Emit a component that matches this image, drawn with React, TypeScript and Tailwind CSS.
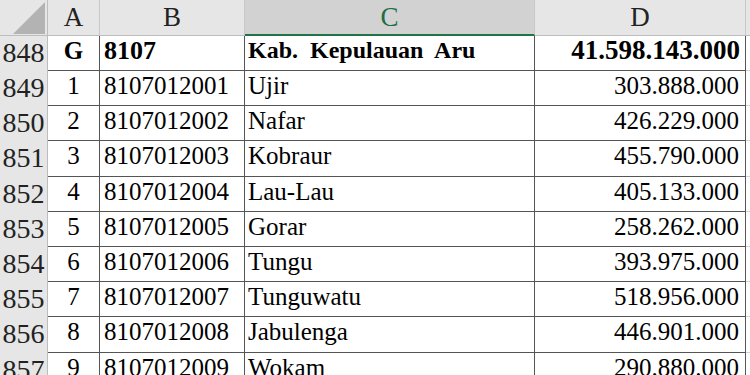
import React from "react";

const rows: [string, string, string, string, string, number][] = [
  ["849", "1", "8107012001", "Ujir", "303.888.000", 35],
  ["850", "2", "8107012002", "Nafar", "426.229.000", 35],
  ["851", "3", "8107012003", "Kobraur", "455.790.000", 36],
  ["852", "4", "8107012004", "Lau-Lau", "405.133.000", 35],
  ["853", "5", "8107012005", "Gorar", "258.262.000", 35],
  ["854", "6", "8107012006", "Tungu", "393.975.000", 35],
  ["855", "7", "8107012007", "Tunguwatu", "518.956.000", 35],
  ["856", "8", "8107012008", "Jabulenga", "446.901.000", 36],
  ["857", "9", "8107012009", "Wokam", "290.880.000", 40],
];

export default function App() {
  return (
    <div className="w-[750px] h-[375px] overflow-hidden bg-white text-black font-['Liberation_Serif','Times_New_Roman',serif]">
      {/* header row */}
      <div className="flex h-[36px] bg-[#e6e6e6]">
        <div className="w-[48px] shrink-0 border-r border-[#bdbdbd] border-b border-b-[#bdbdbd] relative">
          <svg className="absolute left-[13px] top-[2px]" width="33" height="33" viewBox="0 0 33 33">
            <polygon points="32,0 32,32 0,32" fill="#b3b3b3" />
          </svg>
        </div>
        <div className="w-[52px] shrink-0 border-r border-[#c8c8c8] border-b border-b-[#bdbdbd] flex justify-center text-[27px] leading-[34px] text-[#222]">A</div>
        <div className="w-[145px] shrink-0 border-r border-[#c8c8c8] border-b border-b-[#bdbdbd] flex justify-center text-[27px] leading-[34px] text-[#222]">B</div>
        <div className="w-[290px] shrink-0 border-r border-[#c8c8c8] border-b-2 border-b-[#217346] bg-[#d2d2d2] flex justify-center text-[27px] leading-[34px] text-[#1e6e42]">C</div>
        <div className="w-[211px] shrink-0 border-r border-[#c8c8c8] border-b border-b-[#bdbdbd] flex justify-center text-[27px] leading-[34px] text-[#222]">D</div>
        <div className="flex-1 border-b border-b-[#bdbdbd]"></div>
      </div>
      {/* row 848 */}
      <div className="flex h-[35px]">
        <div className="w-[48px] shrink-0 bg-[#e6e6e6] border-r border-[#bdbdbd] flex justify-center text-[28px] leading-[32px] pt-[1px] text-[#222]">848</div>
        <div className="w-[52px] shrink-0 border-r border-b border-[#555] flex justify-center font-bold text-[25px] leading-[29px]">G</div>
        <div className="w-[145px] shrink-0 border-r border-b border-[#555] pl-[4px] font-bold text-[26px] leading-[29px]">8107</div>
        <div className="w-[290px] shrink-0 border-r border-b border-[#555] pl-[3px] font-bold text-[24px] leading-[29px] whitespace-pre">Kab.  Kepulauan  Aru</div>
        <div className="w-[211px] shrink-0 border-r border-b border-[#555] pr-[5px] text-right font-bold text-[27px] leading-[29px]">41.598.143.000</div>
        <div className="flex-1 border-b border-[#d4d4d4]"></div>
      </div>
      {rows.map(([n, a, b, c, d, h]) => (
        <div key={n} className="flex" style={{ height: h }}>
          <div className="w-[48px] shrink-0 bg-[#e6e6e6] border-r border-[#bdbdbd] flex justify-center text-[28px] leading-[32px] pt-[1px] text-[#222]">{n}</div>
          <div className="w-[52px] shrink-0 border-r border-b border-[#555] flex justify-center text-[25px] leading-[29px]">{a}</div>
          <div className="w-[145px] shrink-0 border-r border-b border-[#555] pl-[4px] text-[25px] leading-[29px]">{b}</div>
          <div className="w-[290px] shrink-0 border-r border-b border-[#555] pl-[3px] text-[25px] leading-[29px]">{c}</div>
          <div className="w-[211px] shrink-0 border-r border-b border-[#555] pr-[6px] text-right text-[25px] leading-[29px]">{d}</div>
          <div className="flex-1 border-b border-[#d4d4d4]"></div>
        </div>
      ))}
    </div>
  );
}
